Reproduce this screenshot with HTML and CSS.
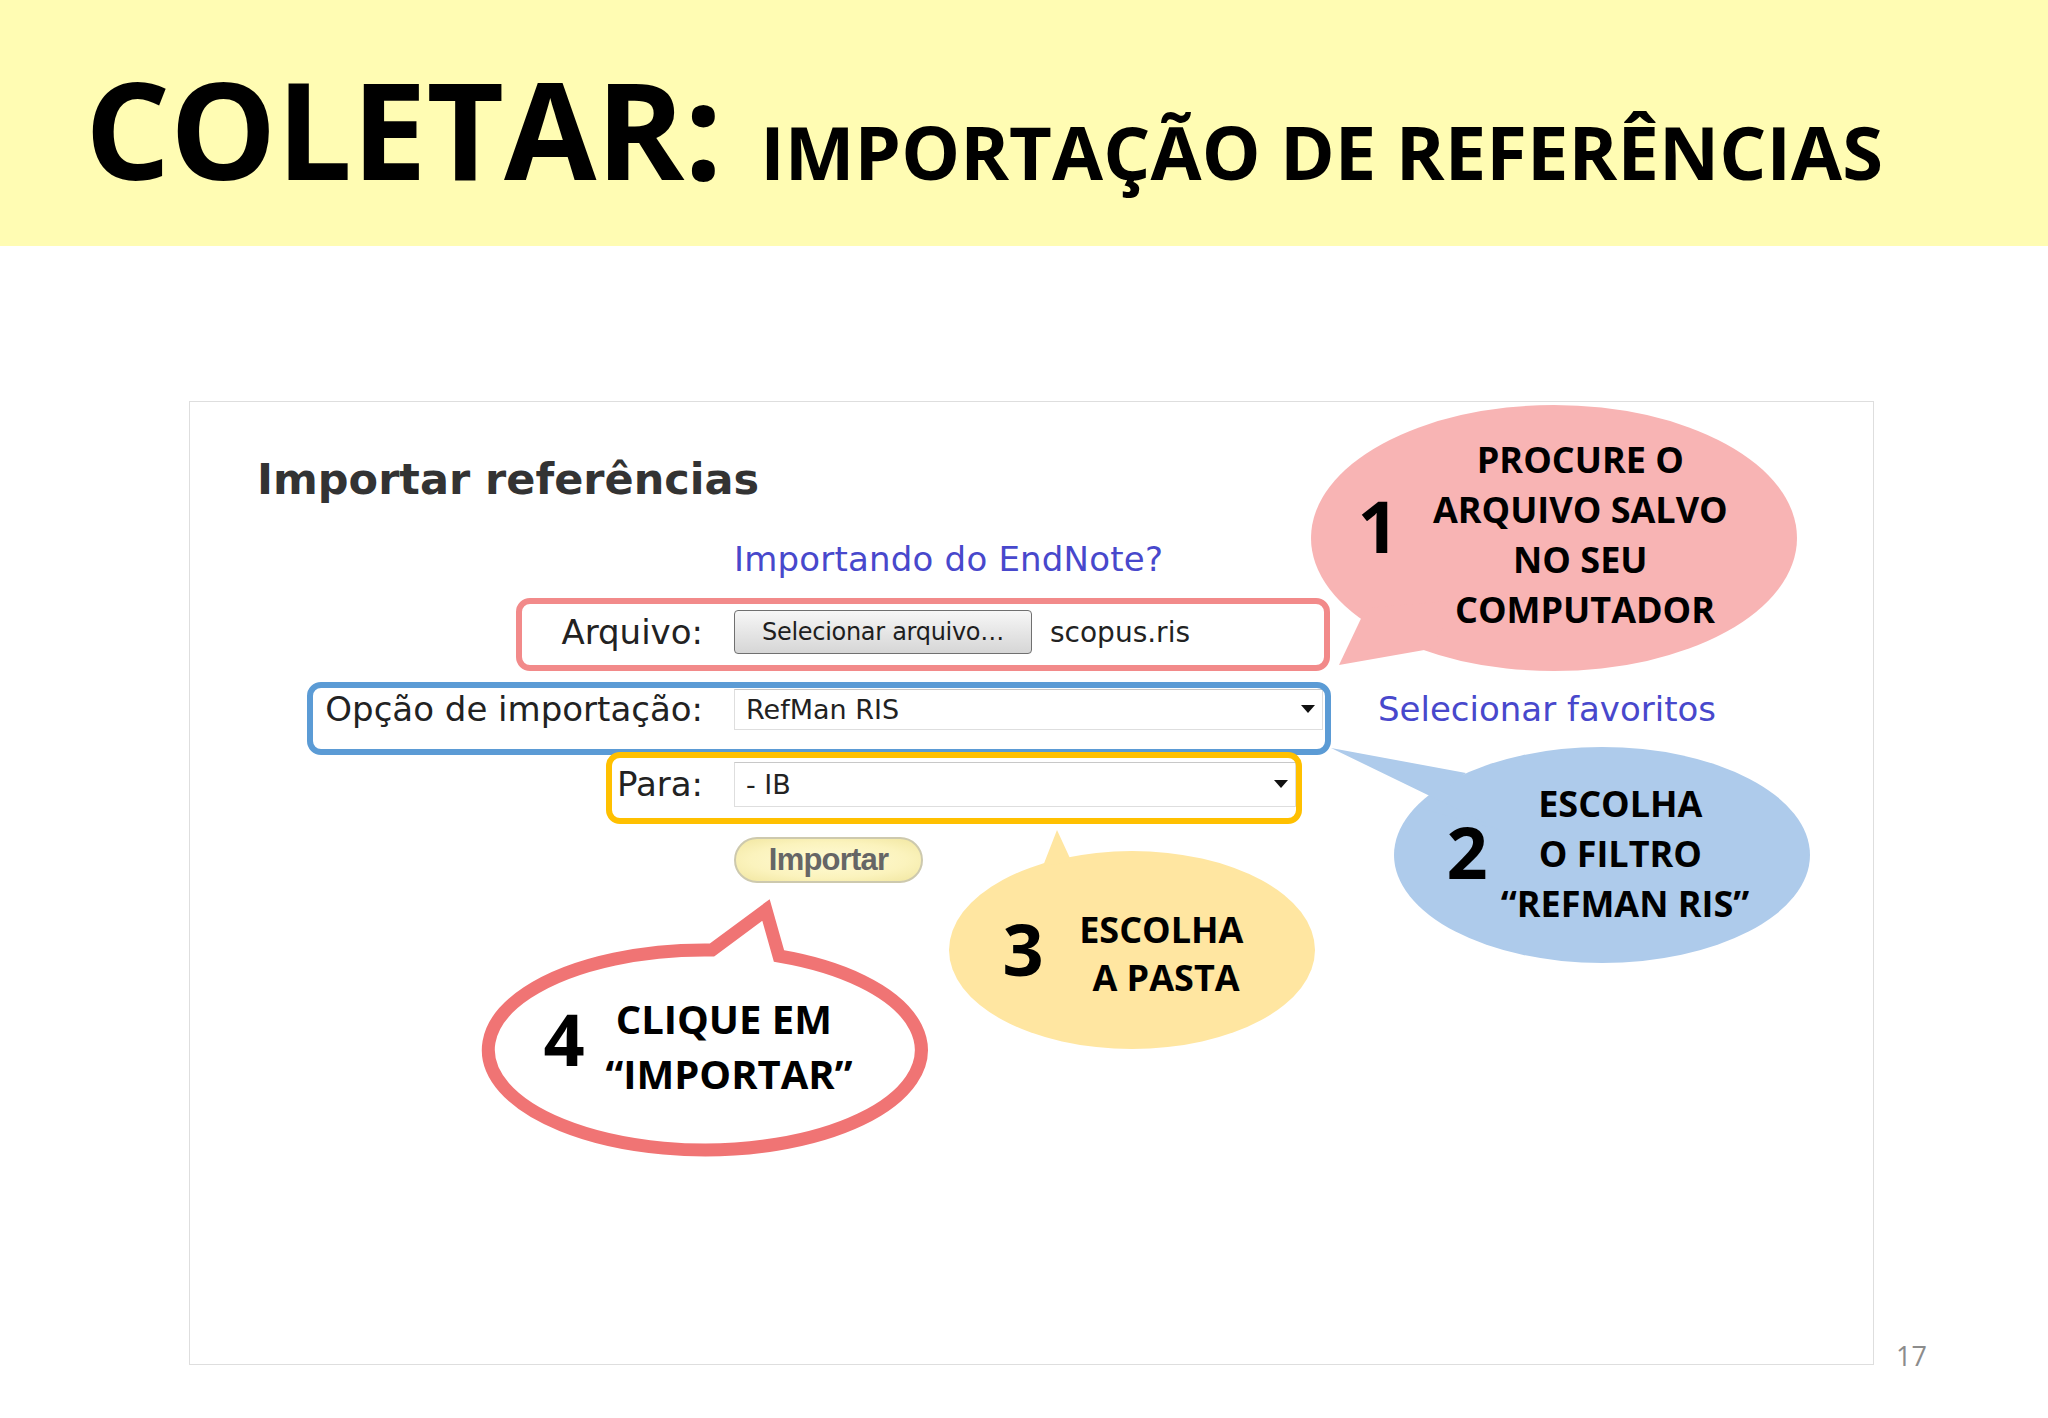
FILE: index.html
```html
<!DOCTYPE html>
<html lang="pt-BR">
<head>
<meta charset="utf-8">
<title>Coletar: importação de referências</title>
<link rel="stylesheet" href="styles.css">
</head>
<body>
<div class="slide">
  <header class="title-bar">
    <h1 class="title"><span class="title-main">COLETAR:</span><span class="title-sub">IMPORTAÇÃO DE REFERÊNCIAS</span></h1>
  </header>
  <div class="stage">
    <section class="panel">
      <h2 class="panel-title">Importar referências</h2>
      <div class="form">
        <span class="cell"></span>
        <a class="link endnote">Importando do EndNote?</a>
        <span class="cell"></span>

        <span class="label">Arquivo:</span>
        <div class="file">
          <span class="file-btn">Selecionar arquivo…</span>
          <span class="file-name">scopus.ris</span>
        </div>
        <span class="cell"></span>

        <span class="label">Opção de importação:</span>
        <div class="select s1"><span>RefMan RIS</span><i class="caret"></i></div>
        <a class="link fav">Selecionar favoritos</a>

        <span class="label">Para:</span>
        <div class="select s2"><span>- IB</span><i class="caret"></i></div>
        <span class="cell"></span>

        <span class="cell"></span>
        <div class="import-wrap"><span class="import-btn">Importar</span></div>
        <span class="cell"></span>
      </div>
    </section>
    <span class="page-num">17</span>
  </div>

  <svg class="annotations" viewBox="0 0 2048 1418" xmlns="http://www.w3.org/2000/svg">
    <!-- highlight boxes -->
    <rect class="box box-red" x="519" y="601" width="808" height="67" rx="11"/>
    <rect class="box box-blue" x="310" y="685" width="1018" height="67" rx="11"/>
    <rect class="box box-yellow" x="609" y="755" width="690" height="66" rx="11"/>

    <!-- bubble 1 -->
    <g class="bubble-pink">
      <ellipse cx="1554" cy="538" rx="243" ry="133"/>
      <polygon points="1366,608 1339,665 1430,649 1460,600"/>
    </g>
    <text class="num" x="1378" y="553" text-anchor="middle">1</text>
    <text class="ct" text-anchor="middle">
      <tspan x="1585" y="473">PROCURE O</tspan>
      <tspan x="1585" y="523">ARQUIVO SALVO</tspan>
      <tspan x="1585" y="573">NO SEU</tspan>
      <tspan x="1585" y="623">COMPUTADOR</tspan>
    </text>

    <!-- bubble 2 -->
    <g class="bubble-blue">
      <ellipse cx="1602" cy="855" rx="208" ry="108"/>
      <polygon points="1331,748 1466,773 1420,808 1500,830"/>
    </g>
    <text class="num" x="1467" y="879" text-anchor="middle">2</text>
    <text class="ct" text-anchor="middle">
      <tspan x="1625" y="817">ESCOLHA</tspan>
      <tspan x="1625" y="867">O FILTRO</tspan>
      <tspan x="1625" y="917">“REFMAN RIS”</tspan>
    </text>

    <!-- bubble 3 -->
    <g class="bubble-yellow">
      <ellipse cx="1132" cy="950" rx="183" ry="99"/>
      <polygon points="1057,830 1043,866 1110,856 1080,880"/>
    </g>
    <text class="num" x="1023" y="976" text-anchor="middle">3</text>
    <text class="ct" text-anchor="middle">
      <tspan x="1166" y="943">ESCOLHA</tspan>
      <tspan x="1166" y="991">A PASTA</tspan>
    </text>

    <!-- bubble 4 -->
    <path class="bubble-outline" d="M 712 950 L 766 910 L 779 956 A 216.5 100 0 1 1 712 950 Z"/>
    <text class="num" x="564" y="1066" text-anchor="middle">4</text>
    <text class="ct ct4" text-anchor="middle">
      <tspan x="729" y="1034">CLIQUE EM</tspan>
      <tspan x="729" y="1089">“IMPORTAR”</tspan>
    </text>
  </svg>
</div>
</body>
</html>
```

FILE: styles.css
```css
html, body {
  margin: 0;
  padding: 0;
  background: #ffffff;
}

.slide {
  position: relative;
  width: 2048px;
  height: 1418px;
  overflow: hidden;
  background: #ffffff;
}

/* ---------- title bar ---------- */
.title-bar {
  height: 246px;
  box-sizing: border-box;
  background: #fffcb3;
  padding: 61px 0 0 85px;
}

.title {
  margin: 0;
  display: flex;
  align-items: baseline;
  font-family: "Open Sans", "DejaVu Sans", sans-serif;
  font-weight: 700;
  color: #000;
  line-height: 1;
}

.title-main {
  font-size: 134px;
  letter-spacing: -0.3px;
}

.title-sub {
  font-size: 74px;
  letter-spacing: 0.1px;
  margin-left: 38px;
}

/* ---------- stage ---------- */
.stage {
  display: flex;
  align-items: flex-end;
  margin-top: 155px;
  padding-left: 189px;
}

.panel {
  width: 1685px;
  height: 964px;
  box-sizing: border-box;
  border: 1px solid #dedede;
  padding-top: 51px;
}

.panel-title {
  margin: 0 0 0 67px;
  font-family: "DejaVu Sans", Verdana, sans-serif;
  font-weight: 700;
  font-size: 43px;
  line-height: 52px;
  color: #333333;
}

.form {
  margin-top: 34px;
  display: grid;
  grid-template-columns: 544px 644px auto;
  grid-template-rows: 55px 76px 78px 72px 80px;
  align-items: center;
}

.label {
  font-family: "DejaVu Sans", Verdana, sans-serif;
  font-size: 34px;
  line-height: 40px;
  color: #222222;
  text-align: right;
  padding-right: 31px;
}

.link {
  font-family: "DejaVu Sans", Verdana, sans-serif;
  font-size: 34px;
  line-height: 40px;
  color: #4848cc;
  text-decoration: none;
}

.endnote {
  align-self: start;
  letter-spacing: 0.2px;
}

.file {
  display: flex;
  align-items: center;
}

.file-btn {
  display: flex;
  align-items: center;
  justify-content: center;
  width: 298px;
  height: 44px;
  box-sizing: border-box;
  border: 1px solid #707070;
  border-radius: 4px;
  background: linear-gradient(#f7f7f7, #e6e6e6 50%, #d6d6d6);
  font-family: "DejaVu Sans", Verdana, sans-serif;
  font-size: 24px;
  color: #1e1e1e;
  letter-spacing: -0.3px;
}

.file-name {
  margin-left: 18px;
  font-family: "DejaVu Sans", Verdana, sans-serif;
  font-size: 28px;
  color: #222222;
}

.select {
  display: flex;
  align-items: center;
  box-sizing: border-box;
  border: 1px solid #dedede;
  border-top-color: #c8c8c8;
  background: #ffffff;
  padding-left: 11px;
  font-family: "DejaVu Sans", Verdana, sans-serif;
  font-size: 27px;
  color: #222222;
}

.s1 {
  width: 589px;
  height: 41px;
}

.s2 {
  width: 562px;
  height: 45px;
}

.caret {
  margin-left: auto;
  margin-right: 7px;
  width: 0;
  height: 0;
  border-left: 7px solid transparent;
  border-right: 7px solid transparent;
  border-top: 8px solid #111111;
}

.import-wrap {
  display: flex;
}

.import-btn {
  display: flex;
  align-items: center;
  justify-content: center;
  width: 189px;
  height: 46px;
  box-sizing: border-box;
  border: 2px solid #cdc9ae;
  border-radius: 23px;
  background: radial-gradient(ellipse at center, #fffbd6 0%, #fbf3bd 60%, #f1e6a0 100%);
  font-family: "Liberation Sans", Arial, sans-serif;
  font-weight: 700;
  font-size: 31px;
  letter-spacing: -0.8px;
  color: #666666;
}

.page-num {
  margin-left: 22px;
  margin-bottom: -4px;
  font-family: "Open Sans", "DejaVu Sans", sans-serif;
  font-size: 27px;
  line-height: 27px;
  color: #8c8c8c;
}

/* ---------- annotations overlay ---------- */
.annotations {
  position: absolute;
  left: 0;
  top: 0;
  width: 2048px;
  height: 1418px;
  pointer-events: none;
}

.box {
  fill: none;
  stroke-width: 6;
}

.box-red { stroke: #f28a8a; }
.box-blue { stroke: #5b9bd5; }
.box-yellow { stroke: #ffc000; }

.bubble-pink { fill: #f8b4b4; }
.bubble-blue { fill: #aecbeb; }
.bubble-yellow { fill: #ffe6a1; }

.bubble-outline {
  fill: #ffffff;
  stroke: #f07474;
  stroke-width: 13;
  stroke-linejoin: miter;
}

.ct {
  font-family: "Open Sans", "DejaVu Sans", sans-serif;
  font-weight: 700;
  font-size: 36px;
  fill: #000000;
}

.ct4 {
  font-size: 40px;
}

.num {
  font-family: "Open Sans", "DejaVu Sans", sans-serif;
  font-weight: 700;
  font-size: 72px;
  fill: #000000;
}
```
